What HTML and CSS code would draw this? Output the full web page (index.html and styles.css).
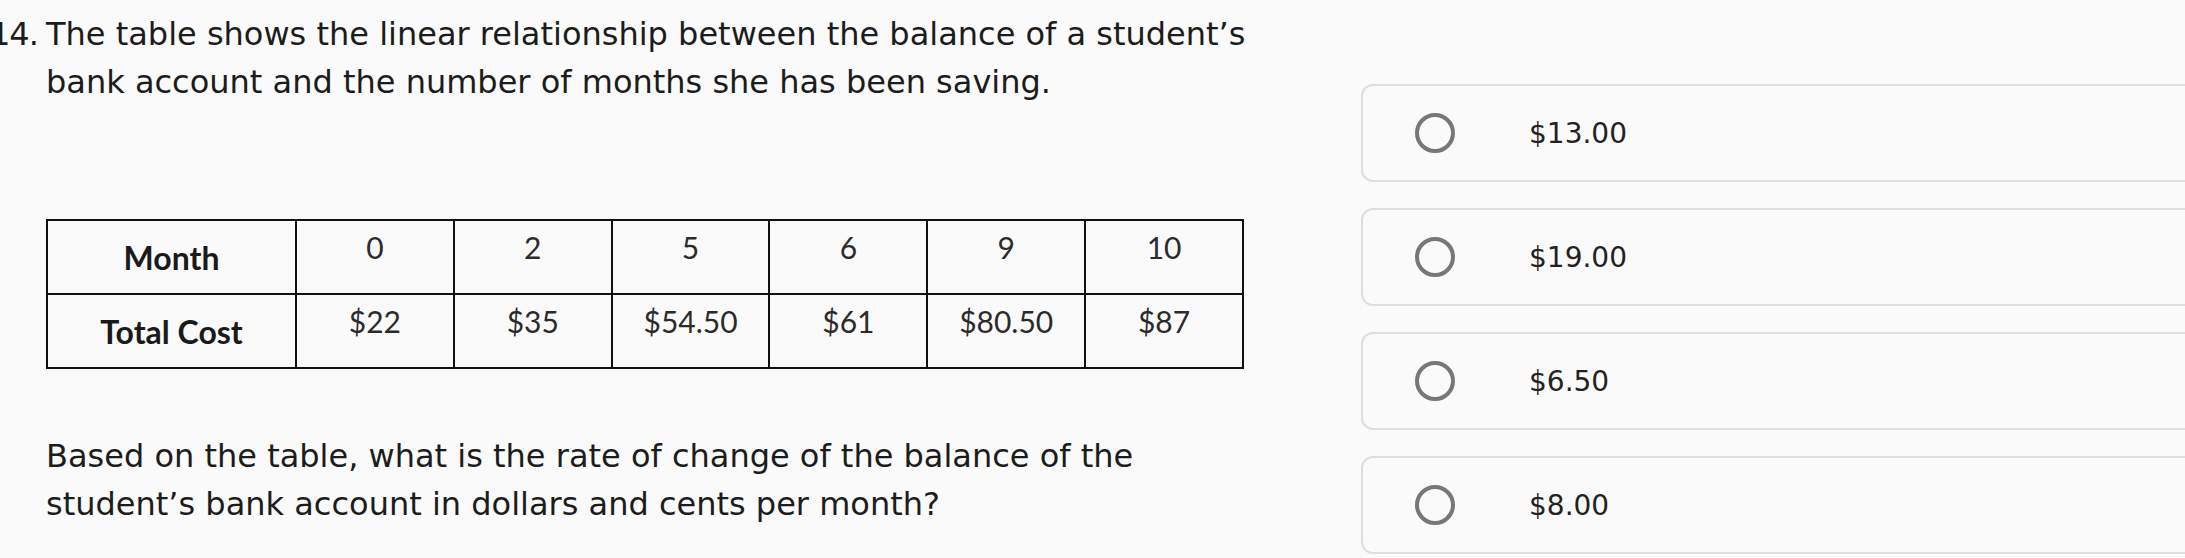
FILE: index.html
```html
<!DOCTYPE html>
<html lang="en">
<head>
<meta charset="utf-8">
<title>Question 14</title>
<link rel="stylesheet" href="styles.css">
</head>
<body>
<div class="page">
  <section class="question">
    <div class="stem">
      <span class="qnum">14.</span>
      <p class="text">The table shows the linear relationship between the balance of a student’s bank account and the number of months she has been saving.</p>
    </div>
    <table class="data">
      <colgroup><col class="head-col"><col><col><col><col><col><col></colgroup>
      <tr><th>Month</th><td>0</td><td>2</td><td>5</td><td>6</td><td>9</td><td>10</td></tr>
      <tr><th>Total Cost</th><td>$22</td><td>$35</td><td>$54.50</td><td>$61</td><td>$80.50</td><td>$87</td></tr>
    </table>
    <p class="text prompt">Based on the table, what is the rate of change of the balance of the student’s bank account in dollars and cents per month?</p>
  </section>
  <section class="choices">
    <div class="choice"><span class="radio"></span><span class="label">$13.00</span></div>
    <div class="choice"><span class="radio"></span><span class="label">$19.00</span></div>
    <div class="choice"><span class="radio"></span><span class="label">$6.50</span></div>
    <div class="choice"><span class="radio"></span><span class="label">$8.00</span></div>
  </section>
</div>
</body>
</html>
```

FILE: styles.css
```css
html, body {
  margin: 0;
  padding: 0;
  background: #fafafa;
  overflow: hidden;
}

.page {
  display: flex;
  align-items: flex-start;
  gap: 75px;
  padding-top: 10px;
  color: #1c1c1c;
  font-family: "DejaVu Sans", Verdana, sans-serif;
}

.question {
  flex: none;
  width: 1240px;
  padding-left: 46px;
}

.stem {
  display: flex;
}

.qnum {
  flex: none;
  width: 56px;
  margin-left: -56px;
  font-size: 32px;
  line-height: 48px;
  letter-spacing: -1px;
  white-space: nowrap;
}

.text {
  margin: 0;
  font-size: 32px;
  line-height: 48px;
}

.data {
  width: 1198px;
  margin-top: 113px;
  border-collapse: collapse;
  table-layout: fixed;
}

.head-col {
  width: 249px;
}

.data tr {
  height: 74px;
}

.data th,
.data td {
  border: 2px solid #111;
  text-align: center;
  padding: 0 6px;
}

.data th {
  font-family: Lato, "Open Sans", sans-serif;
  font-weight: 700;
  font-size: 32px;
  vertical-align: middle;
  color: #1a1a1a;
}

.data td {
  font-family: Lato, "Open Sans", sans-serif;
  font-weight: 400;
  font-size: 30px;
  vertical-align: top;
  padding-top: 8px;
  color: #2b2b2b;
}

.prompt {
  margin-top: 63px;
  width: 1198px;
}

.choices {
  flex: none;
  width: 1000px;
  padding-top: 74px;
  display: flex;
  flex-direction: column;
  gap: 26px;
}

.choice {
  box-sizing: border-box;
  height: 98px;
  border: 2px solid #dedede;
  border-radius: 12px;
  display: flex;
  align-items: center;
  padding-left: 52px;
}

.radio {
  flex: none;
  box-sizing: border-box;
  width: 40px;
  height: 40px;
  border: 4px solid #777;
  border-radius: 50%;
}

.label {
  margin-left: 74px;
  font-size: 28px;
  color: #222;
}
```
